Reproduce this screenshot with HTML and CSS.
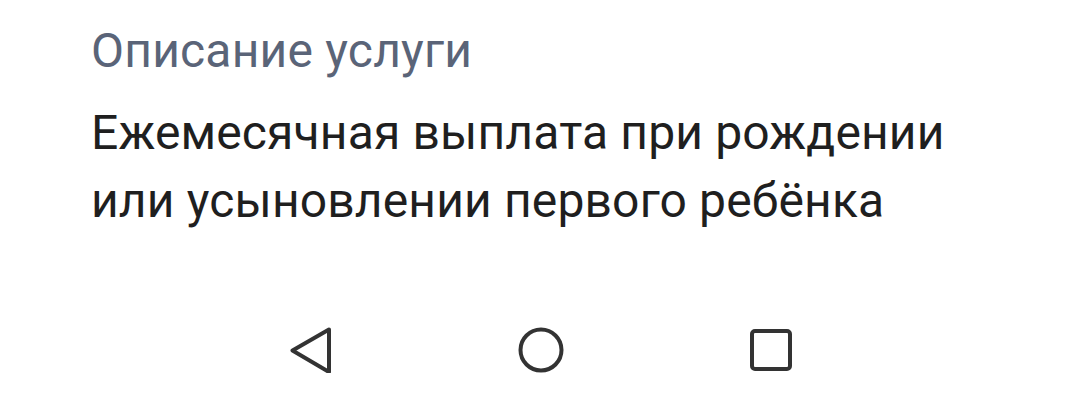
FILE: index.html
```html
<!DOCTYPE html>
<html lang="ru">
<head>
<meta charset="utf-8">
<link rel="stylesheet" href="styles.css">
</head>
<body>
<main class="content">
  <h2 class="label">Описание услуги</h2>
  <p class="value">Ежемесячная выплата при рождении<br>или усыновлении первого ребёнка</p>
</main>
<nav class="navbar">
  <span class="nav-btn">
    <svg width="46" height="46" viewBox="0 0 46 46"><path d="M41 2.5 L4.5 23.5 L41 45 Z" fill="none" stroke="#333" stroke-width="4" stroke-linejoin="round"/></svg>
  </span>
  <span class="nav-btn">
    <svg width="46" height="46" viewBox="0 0 46 46"><circle cx="23" cy="23" r="20.5" fill="none" stroke="#333" stroke-width="4"/></svg>
  </span>
  <span class="nav-btn">
    <svg width="46" height="46" viewBox="0 0 46 46"><rect x="4" y="4" width="38" height="38" rx="3" fill="none" stroke="#333" stroke-width="4"/></svg>
  </span>
</nav>
</body>
</html>
```
FILE: styles.css
```css
html, body {
  margin: 0;
  padding: 0;
  background: #ffffff;
}
body {
  width: 1084px;
  height: 409px;
  overflow: hidden;
  font-family: Roboto, "Noto Sans", sans-serif;
}
.content {
  padding: 23px 0 0 91px;
}
.label {
  margin: 0;
  font-size: 48px;
  line-height: 56px;
  font-weight: 400;
  letter-spacing: 0.2px;
  color: #5a6478;
}
.value {
  margin: 20px 0 0 0;
  font-size: 48px;
  line-height: 68px;
  letter-spacing: 0.15px;
  color: #1f1f1f;
}
.navbar {
  display: flex;
  justify-content: center;
  gap: 184px;
  margin-top: 92px;
  padding-right: 3px;
}
.nav-btn {
  display: flex;
  width: 46px;
  height: 46px;
}
```
